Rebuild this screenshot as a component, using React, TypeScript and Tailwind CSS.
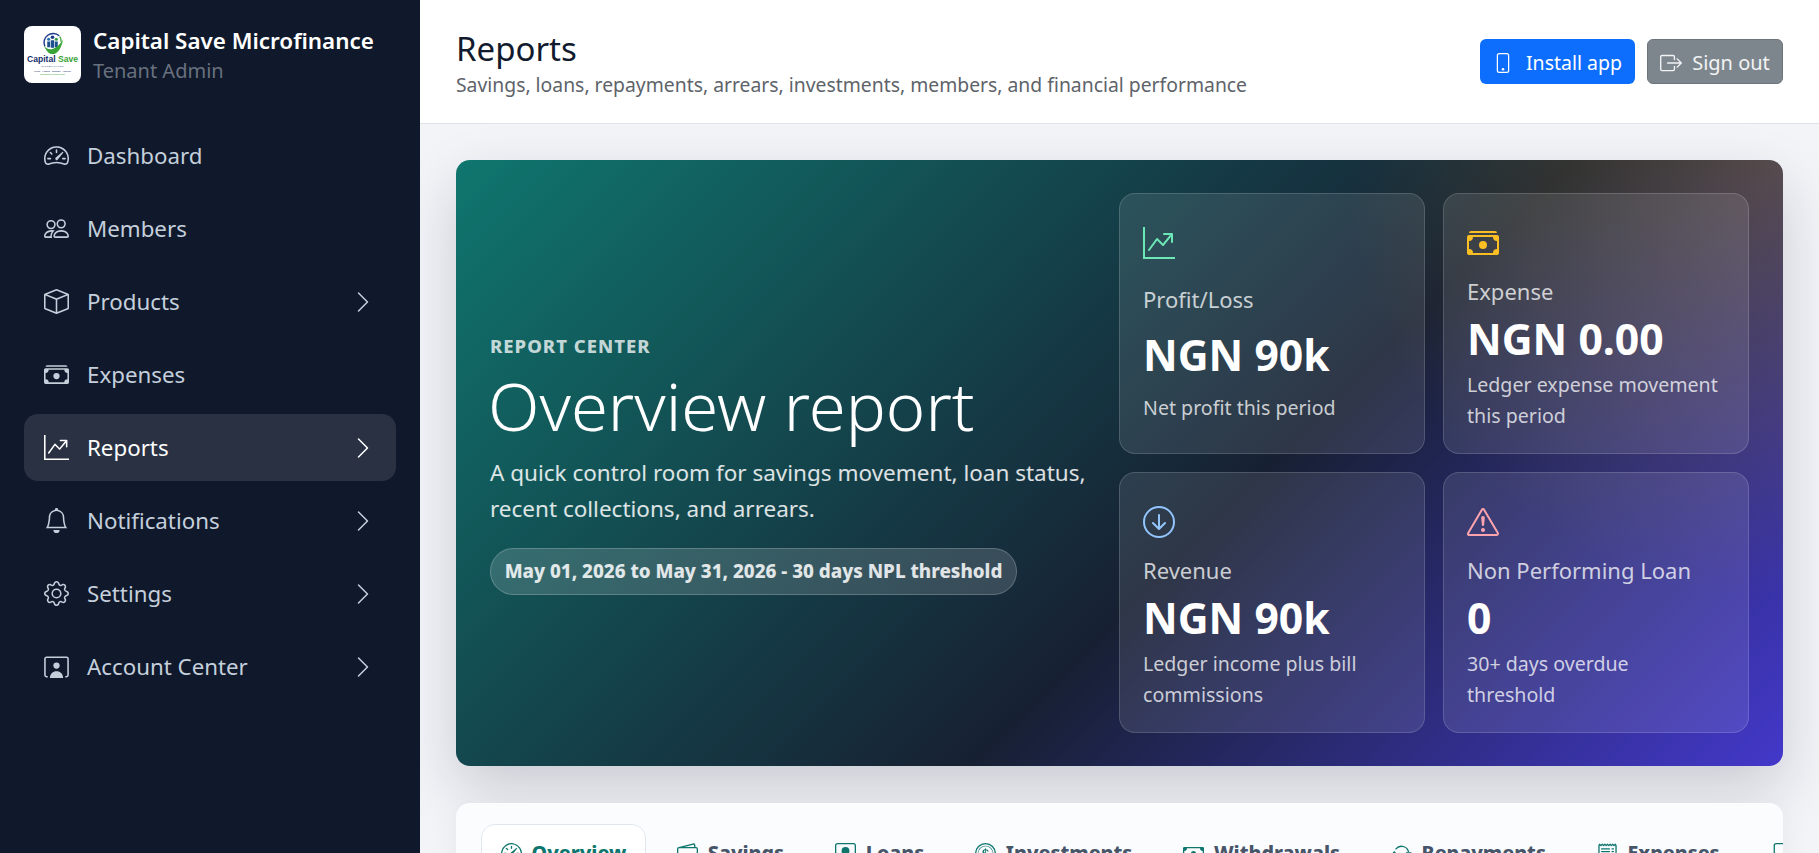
import type { ComponentType } from 'react'
import {
  BsArrowDownCircle,
  BsArrowRepeat,
  BsBell,
  BsBoxArrowRight,
  BsBox,
  BsCash,
  BsCashStack,
  BsChevronRight,
  BsCoin,
  BsExclamationTriangle,
  BsFileEarmark,
  BsGear,
  BsGraphUpArrow,
  BsPeople,
  BsPersonSquare,
  BsPhone,
  BsReceiptCutoff,
  BsSpeedometer,
  BsSpeedometer2,
  BsWallet2,
} from 'react-icons/bs'

type Icon = ComponentType<{ className?: string }>

function AccountIcon({ className }: { className?: string }) {
  return (
    <svg viewBox="0 0 16 16" className={className} aria-hidden>
      <path
        d="M2.4 14.5H1.6a1 1 0 0 1-1-1V3.1a1 1 0 0 1 1-1h12.8a1 1 0 0 1 1 1v10.4a1 1 0 0 1-1 1h-.8"
        fill="none"
        stroke="currentColor"
        strokeWidth="1"
      />
      <circle cx="8" cy="7.4" r="2" fill="currentColor" />
      <path d="M3.8 15.4c0-2.8 1.9-4.4 4.2-4.4s4.2 1.6 4.2 4.4z" fill="currentColor" />
    </svg>
  )
}

type NavItem = { label: string; icon: Icon; chevron?: boolean; active?: boolean }

const NAV_ITEMS: NavItem[] = [
  { label: 'Dashboard', icon: BsSpeedometer2 },
  { label: 'Members', icon: BsPeople },
  { label: 'Products', icon: BsBox, chevron: true },
  { label: 'Expenses', icon: BsCashStack },
  { label: 'Reports', icon: BsGraphUpArrow, chevron: true, active: true },
  { label: 'Notifications', icon: BsBell, chevron: true },
  { label: 'Settings', icon: BsGear, chevron: true },
  { label: 'Account Center', icon: AccountIcon, chevron: true },
]

type Stat = { label: string; value: string; sub: string; icon: Icon; iconClass: string }

const STATS: Stat[] = [
  { label: 'Profit/Loss', value: 'NGN 90k', sub: 'Net profit this period', icon: BsGraphUpArrow, iconClass: 'text-[#6ee7b7]' },
  { label: 'Expense', value: 'NGN 0.00', sub: 'Ledger expense movement this period', icon: BsCashStack, iconClass: 'text-[#fbbf24]' },
  { label: 'Revenue', value: 'NGN 90k', sub: 'Ledger income plus bill commissions', icon: BsArrowDownCircle, iconClass: 'text-[#93c5fd]' },
  { label: 'Non Performing Loan', value: '0', sub: '30+ days overdue threshold', icon: BsExclamationTriangle, iconClass: 'text-[#fda4af]' },
]

const TABS: { label: string; icon: Icon }[] = [
  { label: 'Overview', icon: BsSpeedometer },
  { label: 'Savings', icon: BsWallet2 },
  { label: 'Loans', icon: BsPersonSquare },
  { label: 'Investments', icon: BsCoin },
  { label: 'Withdrawals', icon: BsCash },
  { label: 'Repayments', icon: BsArrowRepeat },
  { label: 'Expenses', icon: BsReceiptCutoff },
  { label: 'Arrears', icon: BsFileEarmark },
]

function LogoMark() {
  return (
    <div className="flex h-[57px] w-[57px] shrink-0 flex-col items-center self-start overflow-hidden rounded-[8px] bg-white pt-[6px]">
      <svg viewBox="0 0 28 24" className="h-[23px] w-[27px]" aria-hidden>
        <path d="M6 15a9.5 9.5 0 0 1 15-11" fill="none" stroke="#1e3a8a" strokeWidth="1.5" />
        <path d="M21.5 4.5a9.5 9.5 0 0 1 1.5 6" fill="none" stroke="#3aa335" strokeWidth="1.2" />
        <circle cx="10" cy="7.5" r="1.6" fill="#1e6fb0" />
        <circle cx="14" cy="5.5" r="1.9" fill="#1e3a8a" />
        <circle cx="18" cy="7.5" r="1.6" fill="#2f9e44" />
        <path d="M8.5 10h3v6h-3zM12.2 8.5h3.6v8h-3.6zM16.5 10h3v6h-3z" fill="#1e4f8f" />
        <path d="M5 14c4 6 12 6 20-6-2 10-6 15-11 15-4 0-7-4-9-9z" fill="#3aa335" />
      </svg>
      <div className="text-[8.6px] leading-[9px] font-bold whitespace-nowrap [font-family:'Liberation_Sans',sans-serif]">
        <span className="text-[#14306b]">Capital </span>
        <span className="text-[#3aa335]">Save</span>
      </div>
      <div className="mt-[1px] text-[2.2px] leading-[3px] tracking-[0.5px] text-[#14306b]">MICROFINANCE</div>
      <div className="mt-[1px] flex gap-[2px] text-[2.5px] leading-[4px] text-[#14306b]">
        <span>Trust</span>
        <span>Access</span>
        <span>Growth</span>
        <span>Impact</span>
      </div>
      <div className="text-[2px] leading-[3px] text-[#3aa335]">Empowering communities</div>
    </div>
  )
}

function Sidebar() {
  return (
    <aside className="flex h-full w-[420px] shrink-0 flex-col bg-[#0f192b]">
      <div className="flex items-center gap-[12px] pl-[24px] pt-[26px]">
        <LogoMark />
        <div>
          <div className="text-[22.4px] leading-[30px] font-semibold whitespace-nowrap text-white">Capital Save Microfinance</div>
          <div className="text-[20px] leading-[29px] text-[#69717f]">Tenant Admin</div>
        </div>
      </div>
      <nav className="mt-[37px] flex flex-col gap-[6px] px-[24px]">
        {NAV_ITEMS.map((item) => {
          const Icon = item.icon
          return (
            <div
              key={item.label}
              className={`flex h-[67px] items-center rounded-[14px] pl-[20px] pr-[21px] ${
                item.active ? 'bg-[#2a3142] text-white' : 'text-[#c5cfdc]'
              }`}
            >
              <Icon className="size-[25px] shrink-0" />
              <span className="ml-[18px] text-[22.3px]">{item.label}</span>
              {item.chevron ? <BsChevronRight className="ml-auto size-[24px]" /> : null}
            </div>
          )
        })}
      </nav>
    </aside>
  )
}

function Topbar() {
  return (
    <header className="flex h-[124px] shrink-0 items-center justify-between border-b border-[#e0e2ea] bg-white pl-[36px] pr-[36px]">
      <div className="pt-[2px]">
        <h1 className="text-[33px] leading-[44px] text-[#121a2e]">Reports</h1>
        <p className="text-[19.35px] leading-[28px] text-[#5e636a]">
          Savings, loans, repayments, arrears, investments, members, and financial performance
        </p>
      </div>
      <div className="flex gap-[12px]">
        <button
          type="button"
          className="flex h-[45px] w-[155px] items-center justify-center gap-[13px] rounded-[6px] bg-[#0d6efd] pt-[3px] text-[19.5px] text-white"
        >
          <BsPhone className="size-[20px]" />
          Install app
        </button>
        <button
          type="button"
          className="flex h-[45px] w-[136px] items-center justify-center gap-[10px] rounded-[6px] border border-[#6c757d] bg-[#7e868d] pt-[3px] text-[20px] text-[#f2f3f4]"
        >
          <BsBoxArrowRight className="size-[22px]" />
          Sign out
        </button>
      </div>
    </header>
  )
}

function StatCard({ stat }: { stat: Stat }) {
  const Icon = stat.icon
  return (
    <div className="grid h-[261px] rounded-[16px] border border-white/15 bg-white/10 px-[23px] py-[22px]">
      <div className="mb-[7px] flex h-[54px] items-center">
        <Icon className={`size-[32px] ${stat.iconClass}`} />
      </div>
      <div className="text-[22px] leading-[28px] text-white/75">{stat.label}</div>
      <div className="mt-[10px] text-[42.7px] leading-[48px] font-bold whitespace-nowrap text-white">{stat.value}</div>
      <div className="mt-[6px] max-w-[252px] text-[19.6px] leading-[31px] text-white/75">{stat.sub}</div>
    </div>
  )
}

function Hero() {
  return (
    <section className="flex rounded-[14px] bg-[radial-gradient(circle_at_top_right,rgba(251,191,36,0.24),transparent_30%),linear-gradient(135deg,#0f766e_0%,#172033_58%,#4338ca_100%)] p-[33px] pl-[34px] pr-[34px] shadow-[0_24px_60px_rgba(15,23,42,0.18)]">
      <div className="flex w-[629px] shrink-0 flex-col justify-center pr-[24px] pt-[3.5px]">
        <div className="text-[18.5px] leading-[22px] font-extrabold tracking-[1px] text-white/75">REPORT CENTER</div>
        <h2 className="mt-[7px] -ml-[2px] text-[67px] leading-[82px] font-light whitespace-nowrap text-white">Overview report</h2>
        <p className="mt-[9.5px] text-[22.5px] leading-[36px] text-white/85">
          A quick control room for savings movement, loan status, recent collections, and arrears.
        </p>
        <div className="mt-[21px] flex h-[47px] w-[527px] items-center justify-center rounded-full border border-white/20 bg-white/15 text-[18.8px] font-extrabold whitespace-nowrap text-white/85">
          May 01, 2026 to May 31, 2026 - 30 days NPL threshold
        </div>
      </div>
      <div className="grid w-[630px] shrink-0 grid-cols-2 gap-[18px]">
        {STATS.map((stat) => (
          <StatCard key={stat.label} stat={stat} />
        ))}
      </div>
    </section>
  )
}

function TabsPanel() {
  return (
    <section className="mt-[37px] h-[200px] overflow-hidden rounded-[14px] bg-[#fbfcfe] px-[25px] pt-[21px] shadow-[0_10px_30px_rgba(15,23,42,0.06)]">
      <div className="flex gap-[11px]">
        {TABS.map((tab, index) => {
          const Icon = tab.icon
          return (
            <div
              key={tab.label}
              className={`flex h-[58px] shrink-0 items-center gap-[9.5px] rounded-[14px] border px-[19px] text-[19.7px] font-extrabold whitespace-nowrap ${
                index === 0 ? 'border-[#e2e6ef] bg-white text-[#0f766e]' : 'border-transparent text-[#475569]'
              }`}
            >
              <Icon className="size-[21px] text-[#0f766e]" />
              {tab.label}
            </div>
          )
        })}
      </div>
    </section>
  )
}

export default function App() {
  return (
    <div className="flex h-screen overflow-hidden bg-[#f3f4f8] font-['Noto_Sans','Liberation_Sans',sans-serif]">
      <Sidebar />
      <div className="flex min-w-0 flex-1 flex-col">
        <Topbar />
        <main className="min-h-0 flex-1 overflow-hidden px-[36px] pt-[36px]">
          <Hero />
          <TabsPanel />
        </main>
      </div>
    </div>
  )
}
